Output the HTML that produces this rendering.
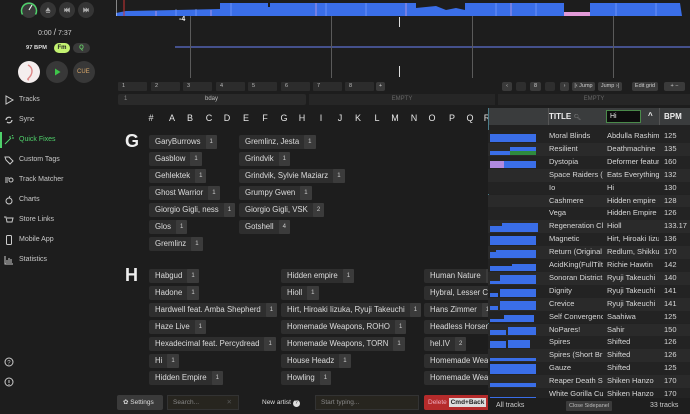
<!DOCTYPE html>
<html><head><meta charset="utf-8"><style>
*{margin:0;padding:0;box-sizing:border-box}
body{width:690px;height:414px;overflow:hidden;background:#1d1d1d;font-family:"Liberation Sans",sans-serif;color:#ddd;position:relative}
.a{position:absolute}
.side{font-size:7px;color:#c9c9c9}
.side div{position:absolute;left:19px}
.ic{position:absolute;left:4px;width:10px;height:10px}
.hc{position:absolute;top:82px;height:9px;width:29px;background:#2c2c2c;border-radius:1px;font-size:5.5px;color:#bbb;padding:1px 0 0 4px}
.btn{position:absolute;top:82px;height:9px;background:#3a3a3a;border-radius:2px;font-size:5.5px;color:#ccc;text-align:center;line-height:9px}
.L{position:absolute;top:113px;font-size:9px;color:#e6e6e6;width:12px;text-align:center}
.chip{position:absolute;height:14px;background:#2e2e2e;border-radius:2px;font-size:7.8px;color:#dcdcdc;line-height:14px;padding-left:6px;white-space:nowrap;display:flex}
.chip b{font-weight:normal;background:#3b3b3b;margin-left:5px;padding:0 4px;font-size:6px;color:#ccc;border-radius:1px}
.big{position:absolute;font-size:18px;font-weight:bold;color:#eee}
.vl{position:absolute;top:16px;width:1px;height:62px;background:#5a5a5a}
.panel{position:absolute;left:488px;top:108px;width:202px;height:306px;background:#222;overflow:hidden}
.row{position:absolute;left:0;width:202px;height:12.9px;font-size:7.5px;color:#d8d8d8;line-height:12.9px;white-space:nowrap}
.row span{position:absolute;overflow:hidden}
.t{left:61px;width:54px}.ar{left:119px;width:52px}.bp{left:176px}
.wf{position:absolute;left:2px;bottom:1px;width:46px;background:#3a6ee8}
.wf2{position:absolute;bottom:1px;background:#3a6ee8}
</style></head><body>
<svg class="a" style="left:0;top:0" width="110" height="90">
<circle cx="29" cy="10" r="8" fill="#3a3a3a"/>
<path d="M22.5 14.5 A7.5 7.5 0 1 1 35.5 14.5" stroke="#4fd16b" stroke-width="1.5" fill="none"/>
<line x1="29" y1="10" x2="32" y2="5" stroke="#eee" stroke-width="1.2"/>
<circle cx="48" cy="10" r="8" fill="#353535"/><path d="M46 11h4l-2-3z M46 12.5h4" stroke="#aaa" stroke-width=".8" fill="#aaa"/>
<circle cx="67" cy="10" r="8" fill="#353535"/><path d="M64.5 8v4M69.5 8v4l-2.5-2zM67 8v4l-2.5-2z" stroke="#aaa" stroke-width=".6" fill="#aaa"/>
<circle cx="86" cy="10" r="8" fill="#353535"/><path d="M83.5 8v4l2.5-2zM86 8v4l2.5-2zM88.5 8v4" stroke="#aaa" stroke-width=".6" fill="#aaa"/>
<circle cx="29" cy="72" r="11" fill="#f4eeee"/><path d="M28 65c4 2 5 6 3 10s-5 4-2 5" stroke="#d88" stroke-width="1.4" fill="none"/>
<circle cx="57" cy="72" r="11" fill="#383838"/><path d="M55 68.5v7l5.5-3.5z" fill="#3ec64a"/>
<circle cx="84" cy="72" r="11" fill="#383838"/>
</svg>
<div class="a" style="left:38px;top:27px;font-size:7px;color:#ccc">0:00 <span style="font-size:9px">/</span> 7:37</div>
<div class="a" style="left:26px;top:45px;font-size:5.8px;color:#ddd;font-weight:bold">97 BPM</div>
<div class="a" style="left:54px;top:43px;width:16px;height:10px;border-radius:5px;background:#c3f271;color:#222;font-size:6px;font-weight:bold;text-align:center;line-height:10px">Fm</div>
<div class="a" style="left:73px;top:43px;width:17px;height:10px;border-radius:5px;background:#3a3a3a;color:#6c6;font-size:6px;font-weight:bold;text-align:center;line-height:10px">Q</div>
<div class="a" style="left:77px;top:69px;font-size:6px;color:#d9a86a">CUE</div>
<div class="a" style="left:0;top:132px;width:2px;height:16px;background:#4fd16b"></div>
<div class="side">
<svg class="ic" style="top:95px" viewBox="0 0 10 10"><path d="M2 1v8l7-4z" stroke="#ccc" fill="none"/></svg><div style="top:96px">Tracks</div>
<svg class="ic" style="top:115px" viewBox="0 0 10 10"><path d="M2 5a3 3 0 0 1 5-2M8 5a3 3 0 0 1-5 2" stroke="#ccc" fill="none" stroke-width="1.2"/></svg><div style="top:116px">Sync</div>
<svg class="ic" style="top:135px" viewBox="0 0 10 10"><path d="M1 9l6-6M6 1v2M8 3h2M8 1l1-1" stroke="#4fd16b" fill="none"/></svg><div style="top:136px;color:#4fd16b">Quick Fixes</div>
<svg class="ic" style="top:155px" viewBox="0 0 10 10"><path d="M1 2h4l4 4-3 3-4-4z" stroke="#ccc" fill="none"/></svg><div style="top:156px">Custom Tags</div>
<svg class="ic" style="top:175px" viewBox="0 0 10 10"><path d="M1 3h4M1 5h3M1 7h3" stroke="#ccc"/><circle cx="7" cy="5" r="2" stroke="#ccc" fill="none"/></svg><div style="top:176px">Track Matcher</div>
<svg class="ic" style="top:195px" viewBox="0 0 10 10"><circle cx="5" cy="6" r="3" stroke="#ccc" fill="none"/><path d="M5 3l1-2" stroke="#ccc"/></svg><div style="top:196px">Charts</div>
<svg class="ic" style="top:215px" viewBox="0 0 10 10"><path d="M0 2h2l1 5h5l1-4H3" stroke="#ccc" fill="none"/></svg><div style="top:216px">Store Links</div>
<svg class="ic" style="top:235px" viewBox="0 0 10 10"><rect x="2.5" y="0.5" width="5" height="9" rx="1" stroke="#ccc" fill="none"/></svg><div style="top:236px">Mobile App</div>
<svg class="ic" style="top:255px" viewBox="0 0 10 10"><path d="M1 1v8h8M3 8V5M5 8V3M7 8V4" stroke="#ccc" fill="none"/></svg><div style="top:256px">Statistics</div>
</div>
<svg class="ic" style="top:357px" viewBox="0 0 10 10"><circle cx="5" cy="5" r="4" stroke="#ccc" fill="none"/><text x="3.3" y="7.3" font-size="6" fill="#ccc" font-family="Liberation Sans">?</text></svg>
<svg class="ic" style="top:377px" viewBox="0 0 10 10"><circle cx="5" cy="5" r="4" stroke="#ccc" fill="none"/><path d="M5 3v3M5 7v1" stroke="#ccc"/></svg>
<svg class="a" style="left:116px;top:0" width="574" height="80">
<path d="M0 16L0 13L10 11L60 10L104 9L104 3L152 3L152 7L154 7L154 3L300 3L300 8L320 6L330 10L340 8L349 10L349 3L448 3L448 12L474 12L474 3L564 3L566 16z" fill="#3a6ee8"/>
<rect x="448" y="12" width="26" height="4" fill="#e29ad8"/>
<path d="M60 9v7M80 9v7M115 3v13M210 3v13M250 3v13M380 3v13M420 3v13M500 3v13M540 3v13" stroke="#8aa8ff" stroke-width=".6"/>
<path d="M40 11v5M95 10v6M200 3v13M290 3v13M395 3v13" stroke="#c79be0" stroke-width=".8"/>
<line x1="8" y1="0" x2="8" y2="16" stroke="#c33" stroke-width="1"/>
<line x1="0" y1="0" x2="0" y2="16" stroke="#eee" stroke-width="1"/>
<line x1="59" y1="47" x2="574" y2="47" stroke="#5b6fd0" stroke-width="1.3"/>
</svg>
<div class="vl" style="left:190px"></div><div class="vl" style="left:331px"></div><div class="vl" style="left:472px"></div><div class="vl" style="left:613px"></div>
<div class="a" style="left:399px;top:17px;width:1px;height:10px;background:#ddd"></div>
<div class="a" style="left:399px;top:66px;width:1px;height:11px;background:#ddd"></div>
<div class="a" style="left:179px;top:16px;font-size:7px;font-weight:bold;color:#eee">-4</div>
<div class="hc" style="left:118px">1</div><div class="hc" style="left:151px">2</div><div class="hc" style="left:183px">3</div><div class="hc" style="left:216px">4</div><div class="hc" style="left:248px">5</div><div class="hc" style="left:281px">6</div><div class="hc" style="left:313px">7</div><div class="hc" style="left:345px">8</div>
<div class="btn" style="left:376px;width:9px">+</div>
<div class="btn" style="left:502px;width:10px">‹</div><div class="btn" style="left:516px;width:10px;background:#2e2e2e"></div><div class="btn" style="left:530px;width:11px">8</div><div class="btn" style="left:545px;width:10px;background:#2e2e2e"></div><div class="btn" style="left:560px;width:9px">›</div>
<div class="btn" style="left:572px;width:23px">|‹ Jump</div><div class="btn" style="left:598px;width:24px">Jump ›|</div>
<div class="btn" style="left:632px;width:26px">Edit grid</div><div class="btn" style="left:664px;width:21px">+ −</div>
<div class="a" style="left:118px;top:94px;width:188px;height:11px;background:#2a2a2a;border-radius:2px;font-size:6px;color:#bbb;line-height:11px"><span style="margin-left:6px;color:#888">1</span><span style="position:absolute;left:87px">bday</span></div>
<div class="a" style="left:309px;top:94px;width:186px;height:11px;background:#262626;font-size:6px;color:#666;line-height:11px;text-align:center">EMPTY</div>
<div class="a" style="left:498px;top:94px;width:192px;height:11px;background:#262626;font-size:6px;color:#666;line-height:11px;text-align:center">EMPTY</div>
<div class="L" style="left:145px">#</div><div class="L" style="left:166px">A</div><div class="L" style="left:184px">B</div><div class="L" style="left:203px">C</div><div class="L" style="left:221px">D</div><div class="L" style="left:240px">E</div><div class="L" style="left:259px">F</div><div class="L" style="left:278px">G</div><div class="L" style="left:296px">H</div><div class="L" style="left:315px">I</div><div class="L" style="left:334px">J</div><div class="L" style="left:352px">K</div><div class="L" style="left:371px">L</div><div class="L" style="left:389px">M</div><div class="L" style="left:408px">N</div><div class="L" style="left:426px">O</div><div class="L" style="left:446px">P</div><div class="L" style="left:464px">Q</div><div class="L" style="left:481px">R</div>
<div class="big" style="left:125px;top:131px">G</div>
<div class="chip" style="left:149px;top:135px">GaryBurrows<b>1</b></div>
<div class="chip" style="left:149px;top:152px">Gasblow<b>1</b></div>
<div class="chip" style="left:149px;top:169px">Gehlektek<b>1</b></div>
<div class="chip" style="left:149px;top:186px">Ghost Warrior<b>1</b></div>
<div class="chip" style="left:149px;top:203px">Giorgio Gigli, ness<b>1</b></div>
<div class="chip" style="left:149px;top:220px">Glos<b>1</b></div>
<div class="chip" style="left:149px;top:237px">Gremlinz<b>1</b></div>
<div class="chip" style="left:239px;top:135px">Gremlinz, Jesta<b>1</b></div>
<div class="chip" style="left:239px;top:152px">Grindvik<b>1</b></div>
<div class="chip" style="left:239px;top:169px">Grindvik, Sylvie Maziarz<b>1</b></div>
<div class="chip" style="left:239px;top:186px">Grumpy Gwen<b>1</b></div>
<div class="chip" style="left:239px;top:203px">Giorgio Gigli, VSK<b>2</b></div>
<div class="chip" style="left:239px;top:220px">Gotshell<b>4</b></div>
<div class="big" style="left:125px;top:265px">H</div>
<div class="chip" style="left:149px;top:269px">Habgud<b>1</b></div>
<div class="chip" style="left:149px;top:286px">Hadone<b>1</b></div>
<div class="chip" style="left:149px;top:303px">Hardwell feat. Amba Shepherd<b>1</b></div>
<div class="chip" style="left:149px;top:320px">Haze Live<b>1</b></div>
<div class="chip" style="left:149px;top:337px">Hexadecimal feat. Percydread<b>1</b></div>
<div class="chip" style="left:149px;top:354px">Hi<b>1</b></div>
<div class="chip" style="left:149px;top:371px">Hidden Empire<b>1</b></div>
<div class="chip" style="left:281px;top:269px">Hidden empire<b>1</b></div>
<div class="chip" style="left:281px;top:286px">Hioll<b>1</b></div>
<div class="chip" style="left:281px;top:303px">Hirt, Hiroaki Iizuka, Ryuji Takeuchi<b>1</b></div>
<div class="chip" style="left:281px;top:320px">Homemade Weapons, ROHO<b>1</b></div>
<div class="chip" style="left:281px;top:337px">Homemade Weapons, TORN<b>1</b></div>
<div class="chip" style="left:281px;top:354px">House Headz<b>1</b></div>
<div class="chip" style="left:281px;top:371px">Howling<b>1</b></div>
<div class="chip" style="left:424px;top:269px">Human Nature<b>1</b></div>
<div class="chip" style="left:424px;top:286px">Hybral, Lesser C<b>1</b></div>
<div class="chip" style="left:424px;top:303px">Hans Zimmer<b>1</b></div>
<div class="chip" style="left:424px;top:320px">Headless Horseman<b>1</b></div>
<div class="chip" style="left:424px;top:337px">hel.IV<b>2</b></div>
<div class="chip" style="left:424px;top:354px">Homemade Weapons<b>1</b></div>
<div class="chip" style="left:424px;top:371px">Homemade Weapons<b>1</b></div>
<div class="a" style="left:117px;top:395px;width:46px;height:15px;background:#3a3a3a;border-radius:2px;font-size:6.5px;color:#ddd;line-height:15px;padding-left:6px">✿ Settings</div>
<div class="a" style="left:167px;top:395px;width:72px;height:15px;background:#27251f;border:1px solid #333;font-size:6.5px;color:#888;line-height:13px;padding-left:5px">Search...<span style="position:absolute;right:6px;color:#555">✕</span></div>
<div class="a" style="left:262px;top:399px;font-size:6.5px;color:#ddd">New artist <span style="display:inline-block;width:7px;height:7px;border-radius:50%;background:#ddd;color:#222;font-size:5px;text-align:center;line-height:7px">?</span></div>
<div class="a" style="left:315px;top:395px;width:104px;height:15px;background:#27251f;border:1px solid #333;font-size:6.5px;color:#888;line-height:13px;padding-left:5px">Start typing...</div>
<div class="a" style="left:424px;top:395px;width:66px;height:15px;background:#b52b2b;border-radius:2px;font-size:6.5px;color:#eab;line-height:15px;padding-left:4px;white-space:nowrap;overflow:hidden">Delete <span style="background:#ddd;color:#222;font-weight:bold;padding:1px 2px">Cmd+Back</span></div>
<div class="panel">
<div class="a" style="left:0;top:0;width:1px;height:306px;background:#4b7d8a"></div>
<div class="a" style="left:1px;top:0;width:201px;height:17px;background:#3a3c3d"></div>
<div class="a" style="left:60px;top:0;width:1px;height:17px;background:#555"></div>
<div class="a" style="left:61px;top:4px;font-size:8px;font-weight:bold;color:#eee">TITLE <span style="color:#888;font-weight:normal;font-size:6px">🔍︎</span></div>
<div class="a" style="left:118px;top:2px;width:35px;height:13px;background:#0d0d0d;border:1px solid #4a8a4a;font-size:7px;color:#eee;padding:2px 3px">Hi</div>
<div class="a" style="left:160px;top:3px;font-size:8px;color:#eee;font-weight:bold">^</div>
<div class="a" style="left:171px;top:0;width:1px;height:17px;background:#555"></div>
<div class="a" style="left:176px;top:4px;font-size:8px;font-weight:bold;color:#eee">BPM</div>
<div id="rows"></div>
<div class="a" style="left:0;top:290px;width:202px;height:16px;background:#1e1e1e;font-size:7px;color:#ccc;line-height:16px"><span style="position:absolute;left:8px">All tracks</span><span style="position:absolute;left:78px;top:3px;height:10px;line-height:10px;padding:0 3px;background:#3b3b3b;font-size:5.5px;color:#bbb;border-radius:1px">Close Sidepanel</span><span style="position:absolute;left:162px">33 tracks</span></div>
</div>
<script>
var d=[["Moral Blinds","Abdulla Rashim","125"],["Resilient","Deathmachine","135"],["Dystopia","Deformer featuri","160"],["Space Raiders (","Eats Everything","132"],["Io","Hi","130"],["Cashmere","Hidden empire","128"],["Vega","Hidden Empire","126"],["Regeneration Cl","Hioll","133.17"],["Magnetic","Hirt, Hiroaki Iizu","136"],["Return (Original","Redlum, Shikku,","170"],["AcidKing(FullTilt","Richie Hawtin","142"],["Sonoran District","Ryuji Takeuchi","140"],["Dignity","Ryuji Takeuchi","141"],["Crevice","Ryuji Takeuchi","141"],["Self Convergenc","Saahiwa","125"],["NoPares!","Sahir","150"],["Spires","Shifted","126"],["Spires (Short Br","Shifted","126"],["Gauze","Shifted","125"],["Reaper Death S","Shiken Hanzo","170"],["White Gorilla Cu","Shiken Hanzo","170"]];
var wf=[[[2,46,8]],[[2,20,4],[22,26,8]],[[2,46,7]],0,0,0,0,[[2,12,6],[14,36,9]],[[2,46,9]],[[2,6,6],[8,40,8]],[[2,22,5],[24,24,7]],[[2,10,3],[12,36,9]],[[2,8,4],[12,36,8]],[[2,8,4],[12,36,9]],[[2,14,3],[16,30,7]],[[2,16,5],[20,28,8]],[[2,16,7],[20,22,8]],[[2,46,3]],[[2,46,10]],[[2,46,4]],[[2,46,3]]];
var h="";for(var i=0;i<d.length;i++){var y=22+i*12.9;var bg=i%2?"#2a2a2a":"#232323";
var w="";if(wf[i]){for(var k=0;k<wf[i].length;k++){var s=wf[i][k];w+='<div class="wf2" style="left:'+s[0]+'px;width:'+s[1]+'px;height:'+s[2]+'px'+(i==1&&k==1?';background:linear-gradient(#3a6ee8 50%,#2e8a3e 50%)':'')+(i==2?';background:linear-gradient(90deg,#b08ae0 30%,#3a6ee8 30%)':'')+'"></div>';}}
h+='<div class="row" style="top:'+y+'px;background:'+bg+'">'+w+'<span class="t">'+d[i][0]+'</span><span class="ar">'+d[i][1]+'</span><span class="bp">'+d[i][2]+'</span></div>';}
document.getElementById("rows").innerHTML=h;
</script>
</body></html>
